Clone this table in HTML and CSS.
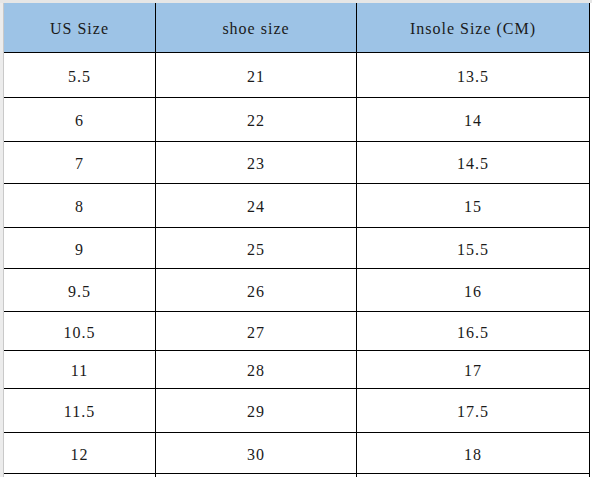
FILE: index.html
```html
<!DOCTYPE html>
<html>
<head>
<meta charset="utf-8">
<link rel="stylesheet" href="styles.css">
</head>
<body>
<div class="sheet">
  <div class="gutter"></div>
  <div class="grid">
    <div class="cell head">US Size</div>
    <div class="cell head">shoe size</div>
    <div class="cell head">Insole Size (CM)</div>
    <div class="cell">5.5</div><div class="cell">21</div><div class="cell">13.5</div>
    <div class="cell">6</div><div class="cell">22</div><div class="cell">14</div>
    <div class="cell">7</div><div class="cell">23</div><div class="cell">14.5</div>
    <div class="cell">8</div><div class="cell">24</div><div class="cell">15</div>
    <div class="cell">9</div><div class="cell">25</div><div class="cell">15.5</div>
    <div class="cell">9.5</div><div class="cell">26</div><div class="cell">16</div>
    <div class="cell">10.5</div><div class="cell">27</div><div class="cell">16.5</div>
    <div class="cell">11</div><div class="cell">28</div><div class="cell">17</div>
    <div class="cell">11.5</div><div class="cell">29</div><div class="cell">17.5</div>
    <div class="cell">12</div><div class="cell">30</div><div class="cell">18</div>
    <div class="cell"></div><div class="cell"></div><div class="cell"></div>
  </div>
</div>
</body>
</html>
```
FILE: styles.css
```css
html, body {
  margin: 0;
  padding: 0;
  background: #ffffff;
  overflow: hidden;
  height: 477px;
}
.sheet {
  display: flex;
  height: 477px;
  overflow: hidden;
  border-top: 3px solid #e6e6e6;
  box-sizing: border-box;
}
.gutter {
  width: 3px;
  flex: none;
  background: #ececec;
  border-right: 1px solid #c9c9c9;
}
.grid {
  display: grid;
  grid-template-columns: 152px 201px 233px;
  grid-template-rows: 50px 45px 44px 42px 44px 41px 43px 39px 38px 44px 41px 40px;
  font-family: "Liberation Serif", "DejaVu Serif", serif;
  font-size: 16px;
  letter-spacing: 1px;
  color: #1a1a1a;
}
.cell {
  box-sizing: border-box;
  border-right: 1px solid #000;
  border-bottom: 1px solid #000;
  display: flex;
  align-items: center;
  justify-content: center;
  white-space: nowrap;
  padding-top: 3px;
}
.head {
  background: #9dc3e6;
}
```
